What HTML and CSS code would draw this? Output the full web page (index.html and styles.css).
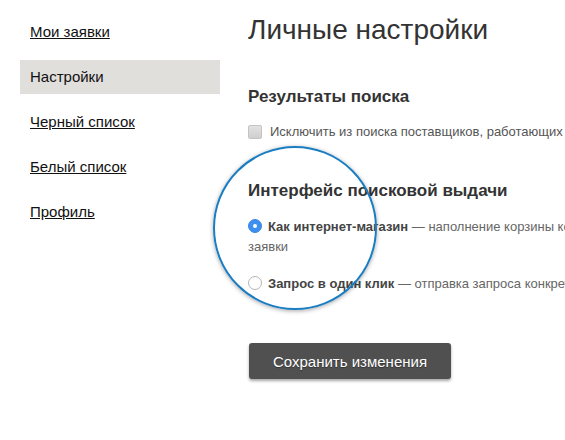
FILE: index.html
```html
<!DOCTYPE html>
<html lang="ru">
<head>
<meta charset="utf-8">
<title>Личные настройки</title>
<link rel="stylesheet" href="styles.css">
</head>
<body>
<div class="page">
  <nav class="sidebar">
    <a class="nav-item" href="#">Мои заявки</a>
    <span class="nav-item active">Настройки</span>
    <a class="nav-item" href="#">Черный список</a>
    <a class="nav-item" href="#">Белый список</a>
    <a class="nav-item" href="#">Профиль</a>
  </nav>
  <main class="content">
    <h1 class="title">Личные настройки</h1>
    <h2 class="section-title first">Результаты поиска</h2>
    <label class="check-row">
      <span class="checkbox"></span>
      <span class="check-text">Исключить из поиска поставщиков, работающих без НДС</span>
    </label>
    <h2 class="section-title second">Интерфейс поисковой выдачи</h2>
    <label class="radio-row">
      <span class="line"><span class="radio checked"></span><b>Как интернет-магазин</b> — наполнение корзины конкретными товарами и отправка</span> заявки
    </label>
    <label class="radio-row">
      <span class="line"><span class="radio"></span><b>Запрос в один клик</b> — отправка запроса конкретному поставщику</span>
    </label>
    <button class="save-btn" type="button">Сохранить изменения</button>
  </main>
</div>
<div class="lens"></div>
</body>
</html>
```
FILE: styles.css
```css
html, body {
  margin: 0;
  padding: 0;
  background: #fff;
  overflow: hidden;
}
body {
  font-family: "Liberation Sans", Arial, sans-serif;
  color: #222;
  width: 565px;
  height: 440px;
  position: relative;
}
.page {
  display: flex;
  padding-left: 20px;
  width: 1000px;
}
.sidebar {
  width: 200px;
  flex: none;
  display: flex;
  flex-direction: column;
  gap: 11px;
  padding-top: 15px;
}
.nav-item {
  display: block;
  padding: 8px 10px;
  line-height: 18px;
  font-size: 15px;
  color: #111;
  text-decoration: underline;
}
.nav-item.active {
  background: #e0dfdc;
  text-decoration: none;
}
.content {
  padding-left: 28px;
  padding-top: 15px;
  width: 520px;
}
.title {
  margin: 0;
  font-size: 28px;
  font-weight: normal;
  line-height: 30px;
  color: #333;
}
.section-title {
  margin: 0;
  font-size: 17px;
  line-height: 20px;
  font-weight: bold;
  color: #333;
}
.section-title.first { margin-top: 42px; }
.section-title.second { margin-top: 40px; }
.check-row {
  display: flex;
  align-items: center;
  gap: 8px;
  margin-top: 16px;
  line-height: 18px;
  font-size: 13px;
  color: #555;
  white-space: nowrap;
}
.checkbox {
  width: 12px;
  height: 12px;
  flex: none;
  border: 1px solid #c4c4c4;
  border-radius: 2px;
  background: linear-gradient(#e2e2e2, #cfcfcf);
}
.radio-row {
  display: block;
  width: 300px;
  margin-top: 16px;
  font-size: 13px;
  line-height: 20px;
  color: #666;
}
.radio-row + .radio-row { margin-top: 17px; }
.radio-row .line {
  white-space: nowrap;
}
.radio-row b {
  color: #444;
}
.radio {
  display: inline-block;
  vertical-align: -2px;
  box-sizing: border-box;
  width: 14px;
  height: 14px;
  margin-right: 6px;
  border: 1px solid #b5b5b5;
  border-radius: 50%;
  background: #fff;
  position: relative;
}
.radio.checked {
  background: #3d8ff0;
  border-color: #3a87e4;
}
.radio.checked::after {
  content: "";
  position: absolute;
  left: 4px;
  top: 4px;
  width: 4px;
  height: 4px;
  border-radius: 50%;
  background: #fff;
}
.save-btn {
  display: block;
  margin-top: 49px;
  margin-left: 1px;
  width: 202px;
  height: 36px;
  border: none;
  border-radius: 3px;
  background: #505050;
  color: #fff;
  font-family: "Liberation Sans", Arial, sans-serif;
  font-size: 15px;
  text-shadow: 0 1px 1px rgba(0,0,0,0.4);
  box-shadow: 0 2px 3px rgba(0,0,0,0.35);
  cursor: pointer;
}
.lens {
  position: absolute;
  left: 213px;
  top: 146px;
  width: 160px;
  height: 160px;
  border: 2px solid #1a7dc2;
  border-radius: 50%;
  box-shadow: 0 1px 4px rgba(0,0,0,0.35);
  pointer-events: none;
}
```
